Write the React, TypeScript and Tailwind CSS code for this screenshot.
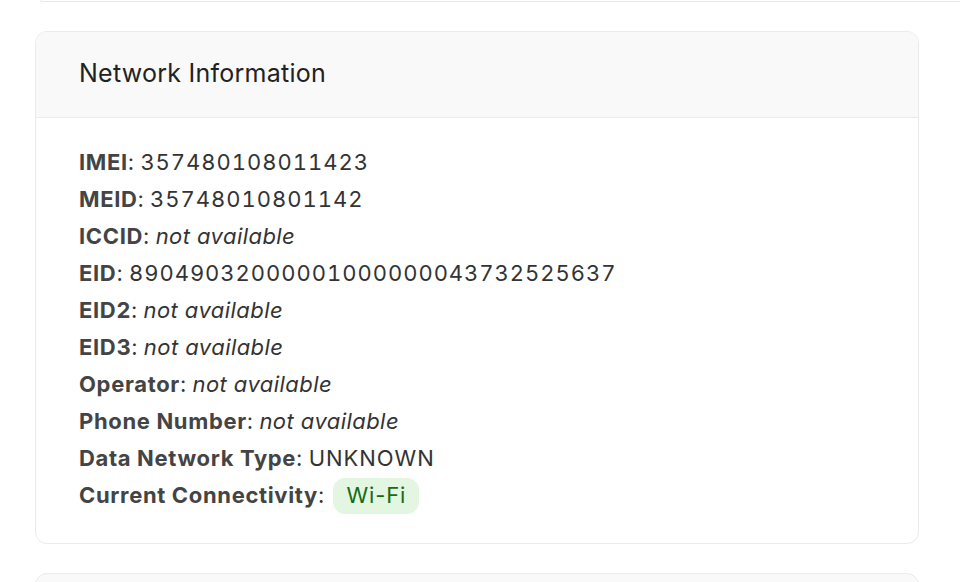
import React from 'react';

type Row = { label: string; value?: string; badge?: string };

const rows: Row[] = [
  { label: 'IMEI', value: '357480108011423' },
  { label: 'MEID', value: '35748010801142' },
  { label: 'ICCID' },
  { label: 'EID', value: '89049032000001000000043732525637' },
  { label: 'EID2' },
  { label: 'EID3' },
  { label: 'Operator' },
  { label: 'Phone Number' },
  { label: 'Data Network Type', value: 'UNKNOWN' },
  { label: 'Current Connectivity', badge: 'Wi-Fi' }
];

function InfoRow({ row }: { row: Row }) {
  return (
    <div className="h-[37px] flex items-center whitespace-nowrap">
      <span className="font-bold text-[#444] tracking-[0.03em]">{row.label}</span>
      <span className="text-[#333]">:&nbsp;</span>
      {row.badge ? (
        <span className="ml-[3px] inline-flex items-center h-[36px] px-[13px] rounded-[12px] bg-[#e2f6e2] text-[#156c15] tracking-[0.04em]">
          {row.badge}
        </span>
      ) : row.value ? (
        <span className="text-[#333] tracking-[0.044em] tabular-nums">{row.value}</span>
      ) : (
        <span className="italic text-[#333] tracking-[0.02em]">not available</span>
      )}
    </div>
  );
}

export default function App() {
  return (
    <div className="w-[960px] h-[582px] overflow-hidden bg-white font-['Inter',sans-serif]">
      <div className="ml-[40px] -mr-[20px] h-[2px] border-b border-x border-[#e9e9e9] rounded-b-[12px]" />

      <div className="mt-[29px] ml-[35px] w-[884px] border border-[#ebebeb] rounded-[12px] overflow-hidden">
        <div className="h-[86px] bg-[#f9f9f9] border-b border-[#ebebeb] flex items-center pl-[43px]">
          <h2 className="text-[25px] text-[#222] tracking-[0.01em] -mt-[2px]">Network Information</h2>
        </div>
        <div className="pt-[26px] pb-[29px] pl-[43px] text-[22px]">
          {rows.map((r) => (
            <InfoRow key={r.label} row={r} />
          ))}
        </div>
      </div>

      <div className="mt-[29px] ml-[35px] w-[884px] h-[40px] bg-[#f9f9f9] border border-[#ebebeb] rounded-t-[12px]" />
    </div>
  );
}
